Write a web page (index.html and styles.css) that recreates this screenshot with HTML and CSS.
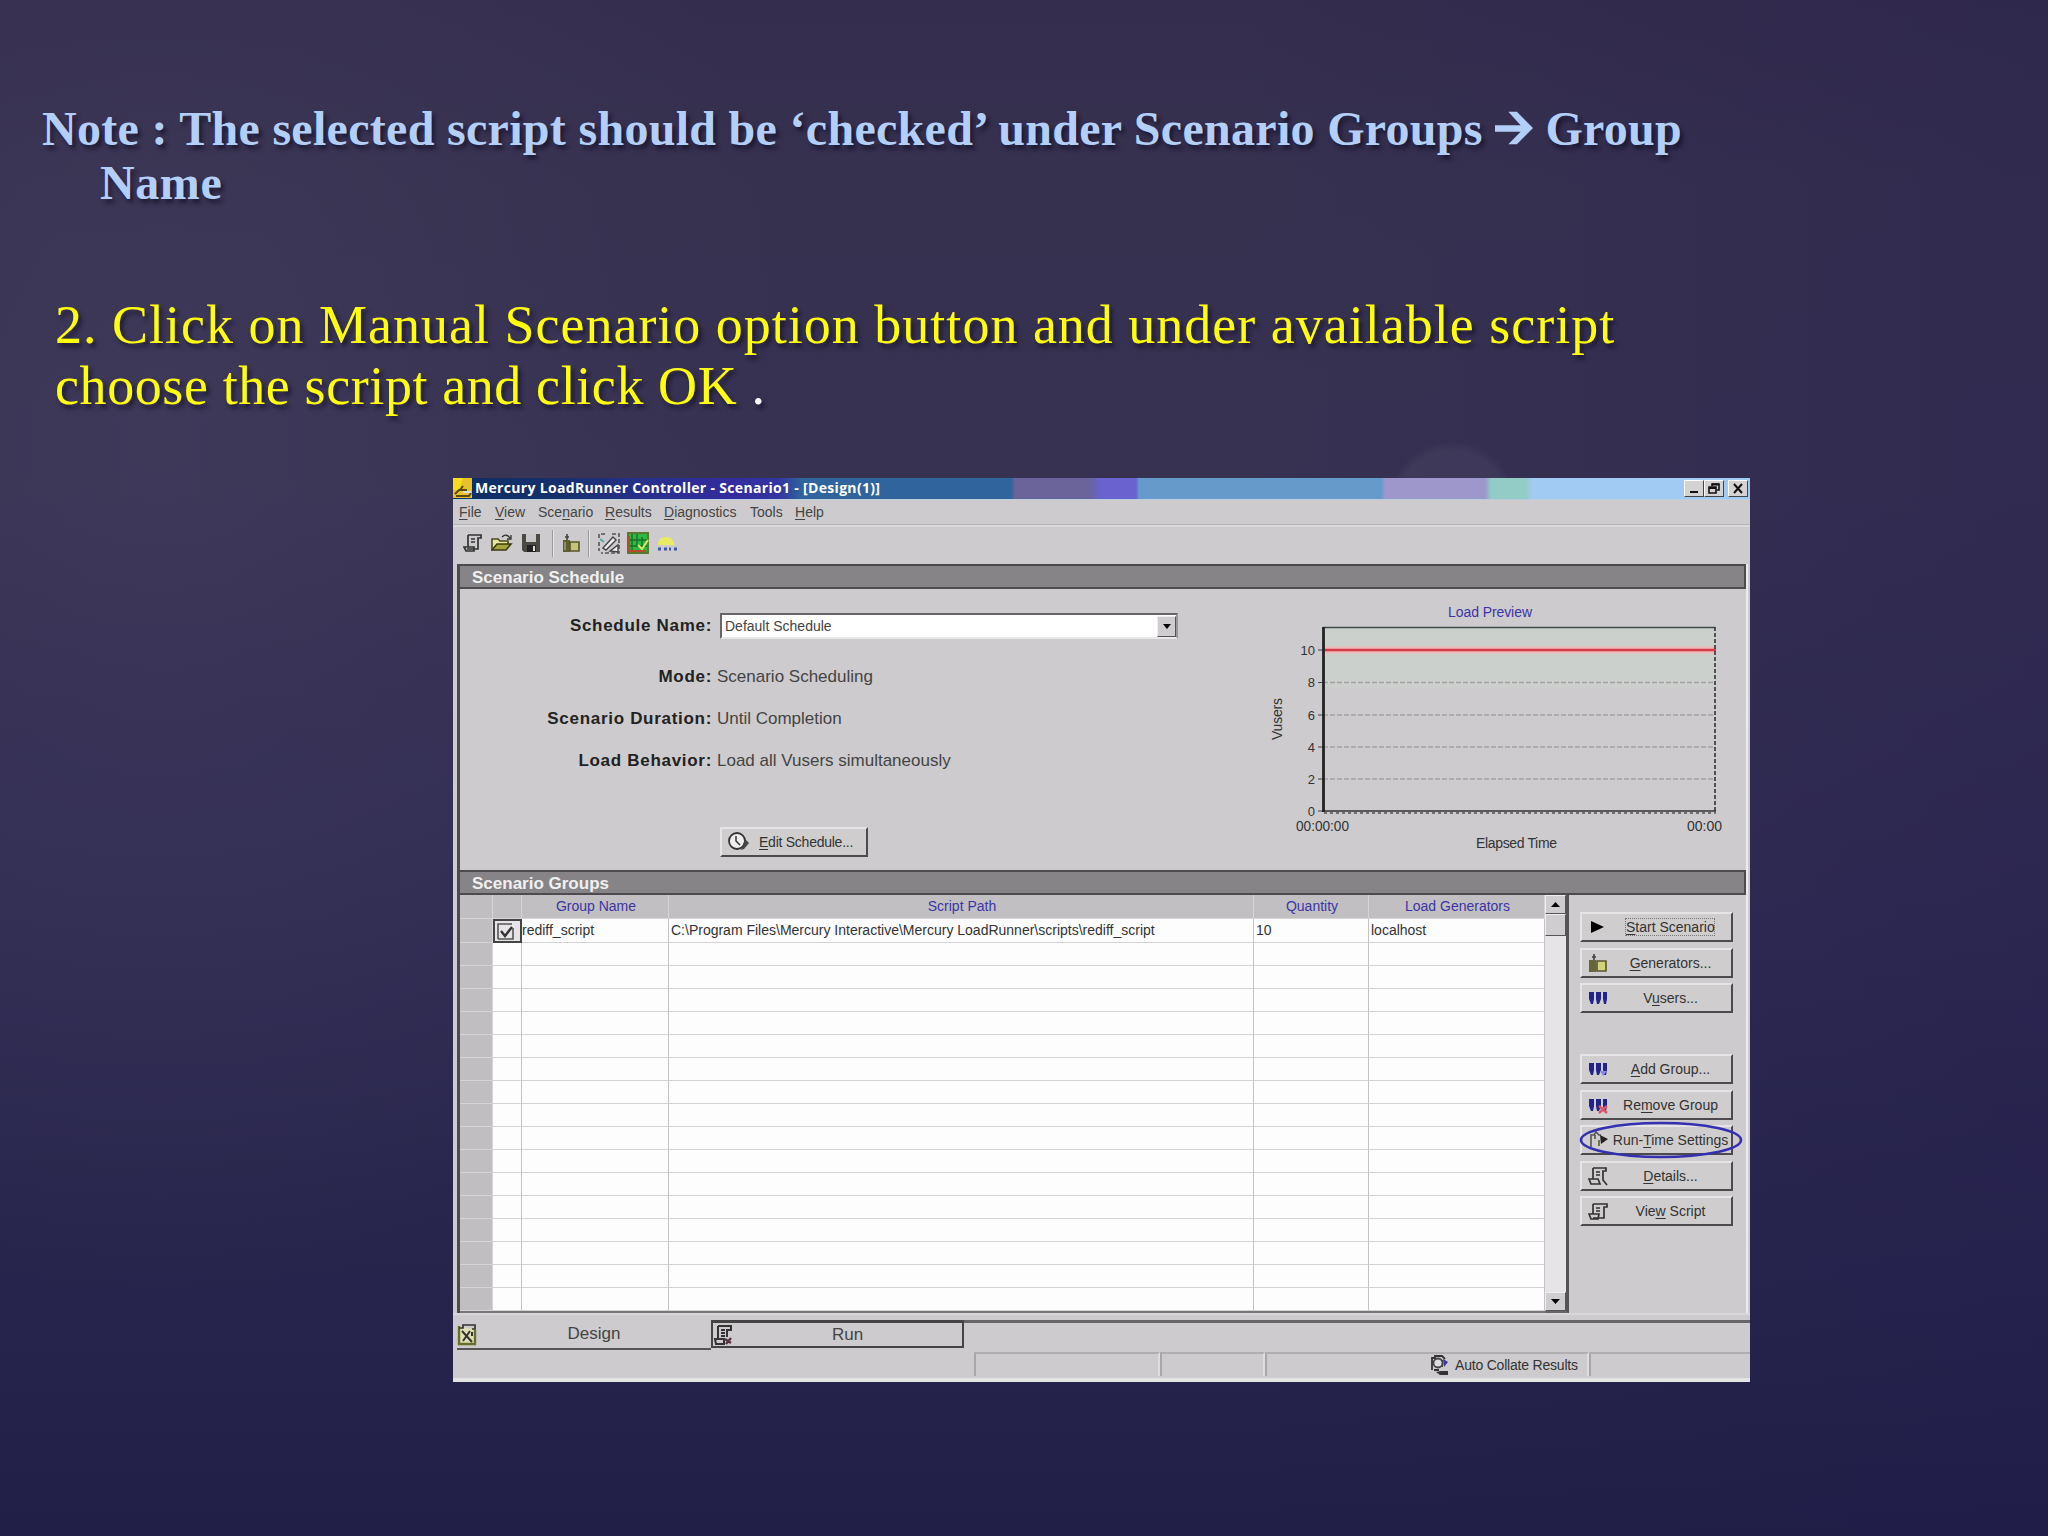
FILE: index.html
```html
<!DOCTYPE html>
<html lang="en">
<head>
    <meta charset="UTF-8">
    <title>Manual Scenario</title>
    <link rel="stylesheet" href="styles.css">
</head>
<body>
    <div class="slide">
        <h1 class="note"><span class="note-first">Note : The selected script should be ‘checked’ under Scenario Groups <svg class="arrow" viewBox="0 0 40 34"><path d="M0 14h27L14 0h9l17 17-17 17h-9l13-13H0z" fill="#b3cff8"/></svg> Group</span><br><span class="note-second">Name</span></h1>
        <p class="step"><span class="step-first">2. Click on Manual Scenario option button and under available script</span><br><span class="step-second">choose the script and click OK <span class="dot">.</span></span></p>

        <div class="window">
            <div class="titlebar">
                <svg class="app-icon" width="19" height="20" viewBox="0 0 19 20"><rect width="19" height="20" fill="#e8c22c"/><path d="M0 0h10L6 12H0z" fill="#f6de1c"/><path d="M2 16l4-4h8M10 8l-3 4M3 18h13l2-3" stroke="#5a4a10" stroke-width="2" fill="none"/><path d="M10 14h8" stroke="#ddd" stroke-width="2"/></svg>
                <span class="title">Mercury LoadRunner Controller - Scenario1 - [Design(1)]</span>
                <div class="win-buttons">
                    <span class="wb"><svg width="18" height="15"><path d="M5 11h8" stroke="#111" stroke-width="2"/></svg></span>
                    <span class="wb"><svg width="18" height="15"><path d="M7 5V3h7v6h-2M4 6h7v6H4z" stroke="#111" stroke-width="1.6" fill="none"/><path d="M4 7h7M7 3.5h7" stroke="#111" stroke-width="2"/></svg></span>
                    <span class="wb close"><svg width="18" height="15"><path d="M5 3l8 9M13 3l-8 9" stroke="#111" stroke-width="2"/></svg></span>
                </div>
            </div>

            <div class="menubar">
                <span class="m-file"><u>F</u>ile</span>
                <span class="m-view"><u>V</u>iew</span>
                <span class="m-scenario">Sce<u>n</u>ario</span>
                <span class="m-results"><u>R</u>esults</span>
                <span class="m-diag"><u>D</u>iagnostics</span>
                <span class="m-tools">Tools</span>
                <span class="m-help"><u>H</u>elp</span>
            </div>

            <div class="toolbar">
                <svg width="20" height="20" viewBox="0 0 20 20"><path d="M5 2h13v3h-3v11H4M5 2v12M1 14h10v4H3zM8 6h4M8 9h4" stroke="#333" stroke-width="1.7" fill="none"/></svg>
                <svg class="t-open" width="22" height="20" viewBox="0 0 22 20"><path d="M1 17V6h6l2 2h8v3" fill="#e8e8a0" stroke="#4a4a18" stroke-width="1.6"/><path d="M1 17l5-6h14l-5 6z" fill="#a5a540" stroke="#3a3a12" stroke-width="1.6"/><path d="M11 4c3-3 6-2 8 1M20 2v4h-4" stroke="#333" stroke-width="1.3" fill="none"/></svg>
                <svg class="t-save" width="20" height="20" viewBox="0 0 20 20"><path d="M1 1h18v18H3l-2-2z" fill="#4a4a42"/><path d="M5 1h10v8H5z" fill="#c8c8c8"/><path d="M6 12h9v7H6z" fill="#222"/><path d="M12 13h2v5h-2z" fill="#ddd"/></svg>
                <i class="tsep sep-a"></i>
                <svg class="t-gen" width="18" height="20" viewBox="0 0 18 20"><path d="M1 7h7v12H1z" fill="#5f5f2c"/><path d="M5 7V1M3 4h4" stroke="#444" stroke-width="1.6"/><path d="M8 9h9v9H8z" fill="#c4c47c" stroke="#55552a" stroke-width="1.6"/><path d="M3 9v8" stroke="#bbb"/></svg>
                <i class="tsep sep-b"></i>
                <svg class="t-design" width="22" height="21" viewBox="0 0 22 21"><path d="M1 5V1h6M14 1h7v19H3M1 9v9" stroke="#555" stroke-width="1.6" stroke-dasharray="4 2" fill="none"/><path d="M5 15L15 4l3 3L8 17zM12 18l8-6v7z" fill="#eee" stroke="#444" stroke-width="1.4"/><path d="M2 6l4 3" stroke="#59a7a7" stroke-width="2"/></svg>
                <svg class="t-run" width="22" height="22" viewBox="0 0 22 22"><rect x="1" y="1" width="20" height="20" fill="#2fb944" stroke="#5b7930" stroke-width="2"/><path d="M5 2v16M10 2v13M15 5v10M3 8h17M3 14h17" stroke="#167229" stroke-width="1.4"/><path d="M2 4v15h17" stroke="#b74a2d" stroke-width="2" fill="none"/><path d="M11 13l4 4 6-9" stroke="#d6e96c" stroke-width="2" fill="none"/></svg>
                <svg class="t-vugen" width="22" height="20" viewBox="0 0 22 20"><path d="M2 12c0-5 2-8 8-8s7 3 9 8z" fill="#e9ea66"/><path d="M2 16h3M8 16h3M13 16h2M18 16h3" stroke="#3d58a0" stroke-width="3"/></svg>
            </div>

            <div class="main">
                <div class="section-head"><span>Scenario Schedule</span></div>
                <div class="schedule">
                    <div class="fields">
                        <div class="field f-name"><label>Schedule Name:</label><div class="combo"><span>Default Schedule</span><i class="combo-btn"><svg width="8" height="5"><path d="M0 0h8L4 5z"/></svg></i></div></div>
                        <div class="field"><label>Mode:</label><span>Scenario Scheduling</span></div>
                        <div class="field"><label>Scenario Duration:</label><span>Until Completion</span></div>
                        <div class="field"><label>Load Behavior:</label><span>Load all Vusers simultaneously</span></div>
                        <div class="btn edit"><svg width="22" height="20" viewBox="0 0 22 20"><circle cx="9" cy="9" r="8" fill="#eee" stroke="#333" stroke-width="1.8"/><path d="M8 4v5l4 4" stroke="#333" stroke-width="1.5" fill="none"/><path d="M17 7l4 4-5 6-3 1z" fill="#444"/></svg><span><u>E</u>dit Schedule...</span></div>
                    </div>
                    <svg class="chart" width="486" height="281" viewBox="1260 588 486 281">
                        <rect x="1323" y="626" width="392" height="60" fill="#cbd0cd"/>
                        <path d="M1323 626.500H1715" stroke="#3e4b4b" stroke-width="1.500"/>
                        <path class="gridline" d="M1323 681.500H1715M1323 714H1715M1323 746H1715M1323 778H1715"/>
                        <path d="M1318 649H1323M1318 681.500H1323M1318 714H1323M1318 746H1323M1318 778H1323M1318 810H1323" stroke="#444"/>
                        <path d="M1324 649H1715" stroke="#efb9b9" stroke-width="7"/>
                        <path d="M1324 649H1716" stroke="#d33c46" stroke-width="2.600"/>
                        <path d="M1715 626V812" stroke="#333" stroke-width="1.600" stroke-dasharray="4 2"/>
                        <path d="M1322 810H1716" stroke="#333" stroke-width="1.500"/>
                        <path d="M1324 812H1716" stroke="#555" stroke-width="1.500" stroke-dasharray="3 3"/>
                        <path d="M1323.500 626V811" stroke="#222" stroke-width="2.800"/>
                        <text x="1448" y="616" textLength="84" class="c-title">Load Preview</text>
                        <text x="1315" y="654" class="tick">10</text>
                        <text x="1315" y="686" class="tick">8</text>
                        <text x="1315" y="719" class="tick">6</text>
                        <text x="1315" y="751" class="tick">4</text>
                        <text x="1315" y="783" class="tick">2</text>
                        <text x="1315" y="815" class="tick">0</text>
                        <text x="1296" y="830" textLength="53" lengthAdjust="spacingAndGlyphs">00:00:00</text>
                        <text x="1687" y="830" textLength="35">00:00</text>
                        <text x="1476" y="847" textLength="81">Elapsed Time</text>
                        <text transform="translate(1282 739) rotate(-90)" textLength="42">Vusers</text>
                    </svg>
                </div>

                <div class="section-head"><span>Scenario Groups</span></div>
                <div class="groups">
                    <div class="grid">
                        <div class="row head"><i></i><i></i><b>Group Name</b><b>Script Path</b><b>Quantity</b><b>Load Generators</b></div>
                        <div class="row"><i></i><i class="check"><svg width="17" height="17" viewBox="0 0 17 17"><path d="M1 16V1h14M16 5v11H1" stroke="#555" stroke-width="1.6" fill="none"/><path d="M4 8l4 5 7-9" stroke="#333" stroke-width="2.4" fill="none"/></svg></i><span class="c-name">rediff_script</span><span class="c-path">C:\Program Files\Mercury Interactive\Mercury LoadRunner\scripts\rediff_script</span><span>10</span><span>localhost</span></div>
                        <div class="row"><i></i><i></i><i></i><i></i><i></i><i></i></div>
                        <div class="row"><i></i><i></i><i></i><i></i><i></i><i></i></div>
                        <div class="row"><i></i><i></i><i></i><i></i><i></i><i></i></div>
                        <div class="row"><i></i><i></i><i></i><i></i><i></i><i></i></div>
                        <div class="row"><i></i><i></i><i></i><i></i><i></i><i></i></div>
                        <div class="row"><i></i><i></i><i></i><i></i><i></i><i></i></div>
                        <div class="row"><i></i><i></i><i></i><i></i><i></i><i></i></div>
                        <div class="row"><i></i><i></i><i></i><i></i><i></i><i></i></div>
                        <div class="row"><i></i><i></i><i></i><i></i><i></i><i></i></div>
                        <div class="row"><i></i><i></i><i></i><i></i><i></i><i></i></div>
                        <div class="row"><i></i><i></i><i></i><i></i><i></i><i></i></div>
                        <div class="row"><i></i><i></i><i></i><i></i><i></i><i></i></div>
                        <div class="row"><i></i><i></i><i></i><i></i><i></i><i></i></div>
                        <div class="row"><i></i><i></i><i></i><i></i><i></i><i></i></div>
                        <div class="row"><i></i><i></i><i></i><i></i><i></i><i></i></div>
                        <div class="row"><i></i><i></i><i></i><i></i><i></i><i></i></div>
                    </div>
                    <div class="scroll">
                        <i class="sb"><svg width="9" height="5"><path d="M0 5h9L4.500 0z"/></svg></i>
                        <i class="thumb"></i>
                        <i class="sb down"><svg width="9" height="5"><path d="M0 0h9L4.500 5z"/></svg></i>
                    </div>
                    <div class="actions">
                        <div class="btn"><svg viewBox="0 0 20 20"><path d="M3 4l13 6-13 6z"/></svg><span class="focus"><u>S</u>tart Scenario</span></div>
                        <div class="btn"><svg viewBox="0 0 20 20"><path d="M1 7h7v12H1z" fill="#66663a"/><path d="M6 7V1M4 4h4" stroke="#444" stroke-width="1.6"/><path d="M9 8h9v10H9z" fill="#d2d27a" stroke="#55552a" stroke-width="1.6"/></svg><span><u>G</u>enerators...</span></div>
                        <div class="btn"><svg viewBox="0 0 20 20"><path id="users" d="M1 4h5v7l-1 5H3l-2-5zM8 4h5v7l-2 5H9l-1-5zM15 4h4v7l-1 5h-2l-1-5z" fill="#22228c"/></svg><span>V<u>u</u>sers...</span></div>
                        <div class="gap"></div>
                        <div class="btn"><svg viewBox="0 0 20 20"><use href="#users"/><path d="M12 12h7l-4 5z" fill="#8a8ae0"/></svg><span><u>A</u>dd Group...</span></div>
                        <div class="btn"><svg viewBox="0 0 20 20"><use href="#users"/><path d="M11 11l8 7M19 11l-8 7" stroke="#e0536b" stroke-width="2.4"/></svg><span>Re<u>m</u>ove Group</span></div>
                        <div class="btn runtime"><svg viewBox="0 0 20 20"><path d="M3 17V5h3l2-3 3 3h2M7 5v4" stroke="#555" stroke-width="1.6" fill="none"/><path d="M12 5l8 4-7 5z" fill="#222"/><path d="M11 10v6" stroke="#6b7b35" stroke-width="2"/></svg><span>Run-<u>T</u>ime Settings</span><svg class="ring" viewBox="0 0 166 38"><ellipse cx="83" cy="19" rx="80" ry="17" fill="none" stroke="#3430b0" stroke-width="2.6"/></svg></div>
                        <div class="btn"><svg viewBox="0 0 20 20"><path d="M5 2h13v3h-3v9l4 5M5 2v11M1 13h9l2 5H3zM8 6h4M8 9h4" stroke="#333" stroke-width="1.7" fill="none"/></svg><span><u>D</u>etails...</span></div>
                        <div class="btn"><svg viewBox="0 0 20 20"><path d="M5 3h14v3h-3v11H5M5 3v10M1 13h10l-1 5H3zM8 7h4M8 10h4" stroke="#333" stroke-width="1.7" fill="none"/></svg><span>Vie<u>w</u> Script</span></div>
                    </div>
                </div>
            </div>

            <div class="tabs">
                <div class="tab design"><svg width="20" height="23" viewBox="0 0 20 23"><path d="M2 3v18h16V7" stroke="#66702c" stroke-width="2.4" fill="#dfe0b4"/><path d="M2 5h4V2h12v4h-3" stroke="#333" stroke-width="1.7" fill="none"/><path d="M5 8l10 11M13 8l-7 10M15 9v4" stroke="#333" stroke-width="2"/></svg><span>Design</span></div>
                <div class="tab run"><svg width="20" height="22" viewBox="0 0 20 22"><path d="M5 2h13v4h-4v7M5 2v12M2 15h9v5H3zM8 6h4M8 9h4M8 12h4" stroke="#333" stroke-width="2" fill="none"/><path d="M12 15l6 4M18 14l-5 6" stroke="#5a3545" stroke-width="2.4"/></svg><span>Run</span></div>
                <div class="tab-rest"></div>
            </div>

            <div class="statusbar">
                <i class="cell s0"></i><i class="cell s1"></i><i class="cell s2"></i><i class="cell s3"></i>
                <div class="cell s4"><svg width="22" height="22" viewBox="0 0 22 22"><path d="M3 16V4h3V2h7l3 3M5 16h5M13 6v7" stroke="#333" stroke-width="1.8" fill="none"/><circle cx="9" cy="9" r="4.500" fill="#ddd" stroke="#444" stroke-width="1.800"/><path d="M14 5l5 3-4 5z" fill="#3a369f"/><path d="M7 18l4 3h8v-4h-7z" fill="#333"/></svg><span>Auto Collate Results</span></div>
                <i class="cell s5"></i>
            </div>
        </div>
    </div>
</body>
</html>
```
FILE: styles.css
```css
* {
    box-sizing: border-box;
}

body {
    margin: 0;
    font-family: "Liberation Sans", Arial, sans-serif;
}

.slide {
    width: 2048px;
    height: 1536px;
    overflow: hidden;
    background:
        radial-gradient(circle at 1452px 505px, rgba(90, 84, 112, 0.25) 54px, transparent 64px),
        radial-gradient(ellipse 620px 900px at 160px 420px, rgba(82, 76, 110, 0.25), transparent),
        linear-gradient(90deg, transparent 60%, rgba(30, 24, 76, 0.25)),
        linear-gradient(#342d4d 0, #373150 12%, #373152 32%, #302b52 60%, #26244c 85%, #211f47 100%);
}

.note {
    margin: 0;
    padding: 102px 0 0 42px;
    height: 286px;
    font: bold 48px/54px "Palatino Linotype", "Liberation Serif", serif;
    color: #b3cff8;
    text-shadow: 3px 4px 4px rgba(10, 8, 30, 0.6);
    white-space: nowrap;
}

.note-first {
    letter-spacing: 0.3px;
}

.note-second {
    padding-left: 58px;
    letter-spacing: 0.6px;
}

.arrow {
    width: 38px;
    height: 34px;
}

.step {
    margin: 0;
    padding: 9px 0 0 55px;
    height: 192px;
    font: 54px/61px "Palatino Linotype", "Liberation Serif", serif;
    color: #ffff0a;
    text-shadow: 3px 4px 4px rgba(10, 8, 30, 0.6);
    white-space: nowrap;
}

.step-first {
    letter-spacing: 1px;
}

.step-second {
    letter-spacing: 0.6px;
}

.dot {
    color: #fff;
}

/* controller window */
.window {
    width: 1297px;
    height: 904px;
    margin-left: 453px;
    background: #cdcbcd;
    display: flex;
    flex-direction: column;
    color: #333;
    font-size: 14px;
    white-space: nowrap;
}

.window i {
    font-style: normal;
}

.window u {
    text-underline-offset: 2px;
}

.titlebar {
    height: 22px;
    display: flex;
    align-items: center;
    padding-right: 2px;
    border-bottom: 1px solid #b9cfe0;
    background: linear-gradient(90deg, #0c2e62 0, #15316d 110px, #28308a 190px, #332c9e 280px, #3335a0 325px, #2f659c 350px, #2f659c 558px, #6b649a 562px, #6b649a 635px, #6a62cf 648px, #6a62cf 683px, #659acb 686px, #659acb 928px, #9d97cc 932px, #9d97cc 1032px, #93cbc6 1038px, #93cbc6 1072px, #a2cbf3 1080px);
}

.title {
    margin-left: 3px;
    font: bold 14px/20px "Open Sans", sans-serif;
    letter-spacing: 0.32px;
    color: #fff;
}

.win-buttons {
    margin-left: auto;
    display: flex;
}

.wb {
    width: 20px;
    height: 17px;
    background: #d4d2d2;
    border: 1px solid;
    border-color: #fff #444 #444 #fff;
}

.wb svg {
    display: block;
}

.close {
    margin-left: 4px;
}

.menubar {
    height: 25px;
    padding-left: 6px;
    display: flex;
    align-items: center;
    border-bottom: 1px solid #b4b4b4;
    color: #444;
}

.m-file { width: 36px; }
.m-view { width: 43px; }
.m-scenario { width: 67px; }
.m-results { width: 59px; }
.m-diag { width: 86px; }
.m-tools { width: 45px; }

.toolbar {
    height: 40px;
    display: flex;
    align-items: center;
    padding: 0 0 4px 10px;
    border-top: 2px solid #dadada;
}

.t-open { margin-left: 8px; }
.t-save { margin-left: 8px; }
.t-gen { margin-left: 8px; }
.t-design { margin-left: 8px; }
.t-run { margin-left: 7px; }
.t-vugen { margin-left: 7px; }

.tsep {
    width: 2px;
    height: 27px;
    background: #9a9a9a;
    border-right: 1px solid #e6e6e6;
}

.sep-a { margin-left: 11px; }
.sep-b { margin-left: 8px; }

.main {
    margin: 0 2px 0 4px;
    border-left: 3px solid #4c4c4c;
    border-right: 2px solid #ececec;
    height: 749px;
}

.section-head {
    height: 25px;
    background: #868486;
    border: 2px solid #4d4b4d;
    border-left: 0;
    padding-left: 12px;
    font-size: 17px;
    line-height: 24px;
    font-weight: bold;
    color: #f0f0f0;
}

.schedule {
    height: 281px;
    display: flex;
    justify-content: space-between;
}

.fields {
    padding-top: 24px;
    width: 800px;
}

.field {
    display: flex;
    align-items: center;
    height: 42px;
    font-size: 17px;
    color: #444;
}

.field label {
    width: 252px;
    text-align: right;
    margin-right: 5px;
    font-weight: bold;
    letter-spacing: 0.7px;
    color: #222;
}

.f-name {
    height: 26px;
    margin-bottom: 17px;
}

.combo {
    margin-left: 3px;
    width: 458px;
    height: 26px;
    background: #fff;
    border: 2px solid #666;
    border-right-color: #999;
    border-bottom-color: #e8e8e8;
    display: flex;
    justify-content: space-between;
    align-items: center;
    padding-left: 3px;
    font-size: 14px;
}

.combo-btn,
.sb,
.thumb {
    background: #cfcdcf;
    border: 1px solid;
    border-color: #eee #555 #555 #eee;
    display: flex;
    align-items: center;
    justify-content: center;
}

.combo-btn {
    width: 19px;
    height: 21px;
}

.btn {
    height: 30px;
    background: #cfcdcd;
    border: 2px solid;
    border-color: #e6e4e6 #4c4a4c #4c4a4c #e6e4e6;
    display: flex;
    align-items: center;
    font-size: 14px;
}

.edit {
    width: 148px;
    margin: 45px 0 0 260px;
    padding-left: 6px;
}

.edit span {
    margin-left: 9px;
    letter-spacing: -0.25px;
}

.chart text {
    font-size: 14px;
    fill: #333;
}

.chart .c-title {
    fill: #3b35a5;
}

.chart .tick {
    text-anchor: end;
    font-size: 13px;
}

.gridline {
    stroke: #a3a1a3;
    stroke-width: 1.5;
    stroke-dasharray: 5 2;
}

.groups {
    display: flex;
    height: 418px;
}

.grid {
    width: 1085px;
    border-bottom: 2px solid #777;
    background: #fefdfe;
    display: flex;
    flex-direction: column;
}

.row {
    flex: 1;
    display: grid;
    grid-template-columns: 33px 29px 147px 585px 115px 1fr;
    align-items: stretch;
    font-size: 14px;
    line-height: 23px;
}

.row > * {
    border-right: 1px solid #c4c2c4;
    border-bottom: 1px solid #d4d2d4;
    padding-left: 2px;
    height: 100%;
}

.row > :first-child {
    background: #c0bec0;
    border-color: #d6d4d6;
}

.head > * {
    background: #c1bfc1;
    border-color: #d6d4d6;
    color: #3b35a5;
    font-weight: normal;
    text-align: center;
}

.row .check {
    border: 2px solid #444;
    display: flex;
    align-items: center;
    background: #e6e4e6;
}

.row .c-name {
    padding-left: 0;
}

.scroll {
    width: 24px;
    background: #e6e4e6;
    border-right: 3px solid #555;
    border-bottom: 2px solid #666;
    display: flex;
    flex-direction: column;
}

.sb {
    height: 19px;
}

.thumb {
    height: 22px;
}

.down {
    margin-top: auto;
}

.actions {
    padding: 17px 0 0 11px;
    display: flex;
    flex-direction: column;
    gap: 5.5px;
    color: #333;
}

.actions .btn {
    width: 153px;
    padding-left: 6px;
}

.actions .btn > svg:first-child {
    width: 20px;
    height: 20px;
}

.actions .btn span {
    flex: 1;
    text-align: center;
    margin-left: 2px;
}

.actions .btn .focus {
    flex: none;
    width: 88px;
    margin-left: 18px;
    outline: 1px dotted #777;
}

.gap {
    height: 30px;
}

.runtime {
    position: relative;
}

.ring {
    position: absolute;
    left: -4px;
    top: -6px;
    width: 166px;
    height: 38px;
}

.tabs {
    height: 39px;
    display: flex;
    padding: 5px 0 0 4px;
    font-size: 17px;
    color: #444;
    border-top: 2px solid #d8d8d8;
}

.tab {
    display: flex;
    align-items: center;
}

.tab span {
    flex: 1;
    text-align: center;
}

.design {
    width: 254px;
    height: 30px;
    border-bottom: 2px solid #555;
}

.run {
    width: 253px;
    height: 28px;
    border: 2px solid #444;
    border-top-width: 3px;
}

.tab-rest {
    flex: 1;
    border-top: 3px solid #666;
}

.statusbar {
    flex: 1;
    display: flex;
    padding-bottom: 2px;
    border-bottom: 4px solid #e2e4e3;
}

.cell {
    border-top: 2px solid #b0aeb0;
    border-left: 2px solid #a8a6a8;
    border-right: 2px solid #dedcde;
}

.s0 { width: 521px; border-color: transparent; }
.s1 { width: 186px; }
.s2 { width: 105px; }
.s3 { width: 162px; border-right: 0; }

.s4 {
    width: 162px;
    display: flex;
    align-items: center;
    border-left: 0;
    padding-left: 2px;
    letter-spacing: -0.2px;
}

.s4 span {
    margin-left: 4px;
}

.s5 {
    flex: 1;
    border-right: 0;
}
```
